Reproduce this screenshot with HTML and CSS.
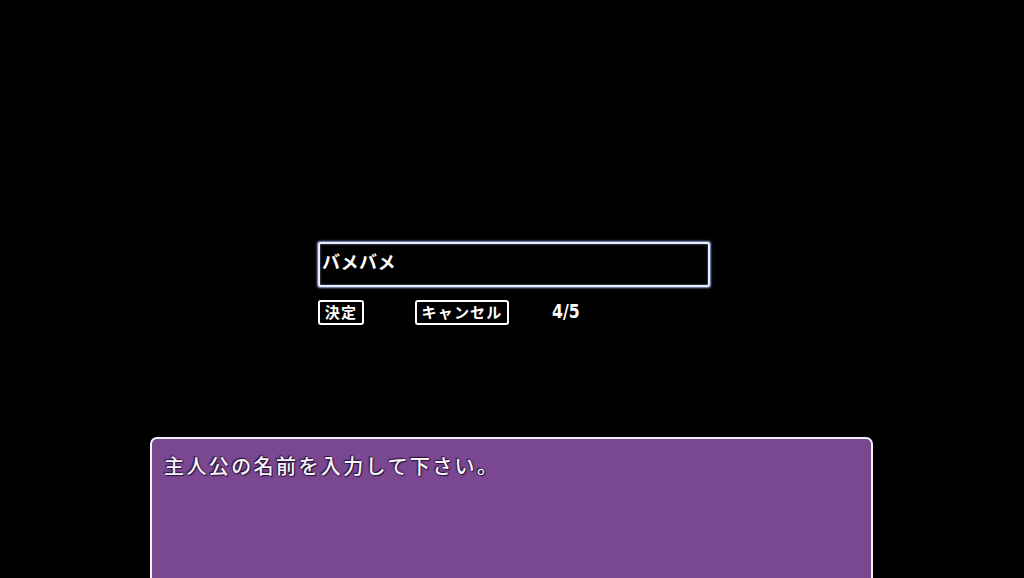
FILE: index.html
```html
<!DOCTYPE html>
<html lang="ja">
<head>
<meta charset="utf-8">
<link rel="stylesheet" href="styles.css">
</head>
<body>
<div class="screen">
  <div class="editor">
    <div class="name-field"><span class="name-text">バメバメ</span></div>
    <div class="controls">
      <div class="btn btn-ok">決定</div>
      <div class="btn btn-cancel">キャンセル</div>
      <div class="count">4/5</div>
    </div>
  </div>
  <div class="message">
    <p class="message-text">主人公の名前を入力して下さい。</p>
  </div>
</div>
</body>
</html>
```
FILE: styles.css
```css
html, body {
  margin: 0;
  padding: 0;
  background: #000;
  width: 1024px;
  height: 578px;
  overflow: hidden;
}
.screen {
  display: flex;
  flex-direction: column;
  width: 1024px;
  height: 578px;
  font-family: "Noto Sans CJK JP", "Noto Sans", sans-serif;
  color: #fff;
}
.editor {
  flex-shrink: 0;
  margin: 242px 0 0 318px;
  display: flex;
  flex-direction: column;
  gap: 13px;
}
.name-field {
  box-sizing: border-box;
  width: 392px;
  height: 45px;
  border: 2px solid #e8eeff;
  box-shadow: 0 0 2px 1px #8fa4d8, inset 0 0 2px #8fa4d8;
  border-radius: 2px;
  display: flex;
  align-items: center;
  padding-left: 2px;
}
.name-text {
  font-size: 18px;
  font-weight: 700;
  letter-spacing: 0.5px;
  line-height: 1;
  margin-top: -8px;
}
.controls {
  display: flex;
  align-items: center;
  height: 25px;
}
.btn {
  box-sizing: border-box;
  height: 25px;
  border: 2px solid #fff;
  border-radius: 3px;
  font-size: 15px;
  font-weight: 700;
  display: flex;
  align-items: center;
  justify-content: center;
  line-height: 1;
  letter-spacing: 1.2px;
  padding-bottom: 3px;
}
.btn-ok {
  width: 46px;
}
.btn-cancel {
  width: 94px;
  margin-left: 51px;
}
.count {
  margin-left: 43px;
  font-family: "DejaVu Sans Condensed", "Liberation Sans Narrow", "Noto Sans", sans-serif;
  font-size: 19px;
  font-weight: 700;
  line-height: 1;
  padding-bottom: 3px;
  transform: scaleX(0.92);
  transform-origin: left center;
}
.message {
  flex-shrink: 0;
  box-sizing: border-box;
  margin: 112px 0 0 150px;
  width: 723px;
  height: 160px;
  background: #7a4791;
  border: 2px solid #f4f0f6;
  border-radius: 7px;
  padding: 17px 0 0 12px;
}
.message-text {
  margin: 0;
  font-size: 20px;
  font-weight: 500;
  line-height: 1;
  letter-spacing: 2.4px;
  color: #f8f4fa;
  text-shadow: 0 0 2px #2a1238, 1px 1px 1px #2a1238, -1px -1px 1px #2a1238;
}
```
